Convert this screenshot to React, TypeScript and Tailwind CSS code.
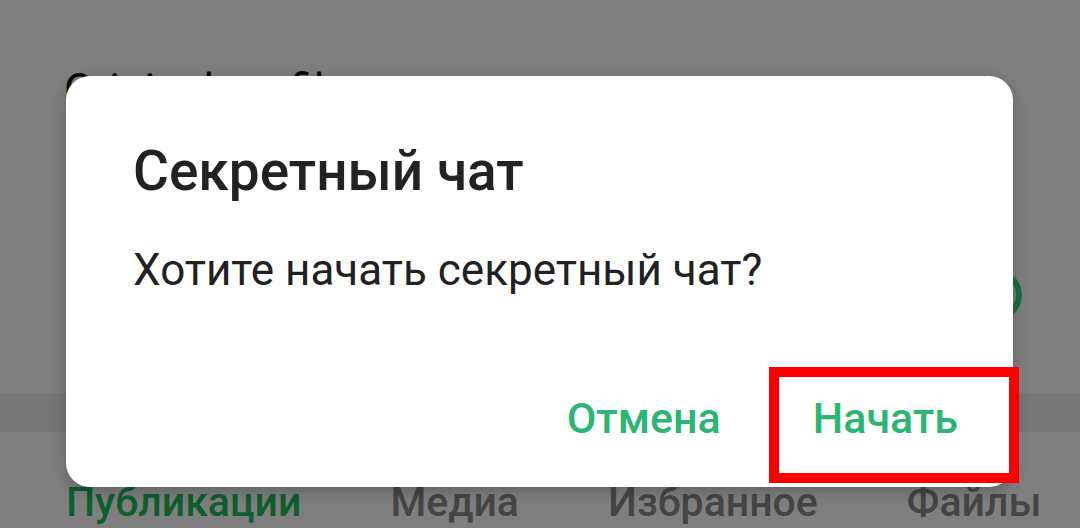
import { useState } from 'react';

const tabs = ['Публикации', 'Медиа', 'Избранное', 'Файлы'];

function ProfilePage() {
  const [active] = useState(0);

  return (
    <div className="flex h-[528px] w-[1080px] flex-col bg-white font-['Roboto',sans-serif]">
      <div className="pl-[64px] pt-[68px] text-[44px] leading-none text-[#111]">
        Original profile
      </div>

      <div className="flex justify-end pr-[58px] pt-[158px]">
        <div className="h-[50px] w-[50px] rounded-full border-[6px] border-[#36dc7e]" />
      </div>

      <div className="mt-[73px] h-[39px] bg-[#eeeeee]" />

      <nav className="mt-[50px] flex gap-[89px] pl-[66px] text-[41px] font-medium leading-none">
        {tabs.map((tab, i) => (
          <span
            key={tab}
            className={i === active ? 'text-[#1cbc5e]' : 'text-[#8a8a8a]'}
          >
            {tab}
          </span>
        ))}
      </nav>
    </div>
  );
}

function SecretChatDialog() {
  return (
    <div className="absolute left-[66px] top-[76px] flex h-[411px] w-[947px] flex-col rounded-[24px] bg-white font-['Roboto',sans-serif] shadow-[0_4px_16px_rgba(0,0,0,0.25)]">
      <h2 className="pl-[67px] pt-[68px] text-[55px] font-medium leading-none text-[#222]">
        Секретный чат
      </h2>
      <p className="mt-[49px] pl-[67px] text-[44px] leading-none text-[#212121]">
        Хотите начать секретный чат?
      </p>
      <div className="mt-[105px] flex justify-end gap-[92px] pr-[55px] text-[43px] font-medium leading-none text-[#2bb673]">
        <button type="button">Отмена</button>
        <button type="button">Начать</button>
      </div>
    </div>
  );
}

export default function App() {
  return (
    <div className="relative h-[528px] w-[1080px] overflow-hidden">
      <ProfilePage />
      <div className="absolute inset-0 bg-black/50" />
      <SecretChatDialog />
      {/* highlight around the confirm button */}
      <div className="absolute left-[769px] top-[367px] h-[116px] w-[250px] border-[10px] border-[#ff0000]" />
    </div>
  );
}
